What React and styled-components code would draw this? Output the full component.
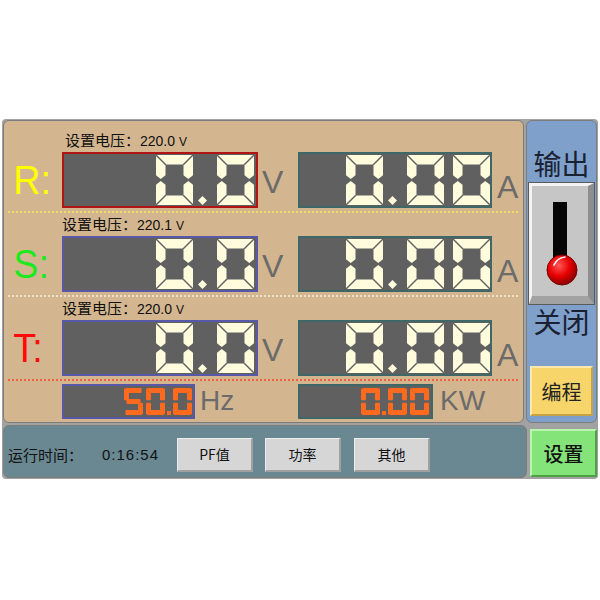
import React from 'react';
import styled, { createGlobalStyle } from 'styled-components';

const GlobalStyle = createGlobalStyle`
  html, body { margin: 0; padding: 0; background: #ffffff; }
  body { font-family: "Liberation Sans", "Noto Sans CJK SC", sans-serif; }
  * { box-sizing: border-box; }
`;

const CJK = `"Noto Sans CJK SC", "Liberation Sans", sans-serif`;

const SEGS = {
  '0': 'abcdef', '1': 'bc', '2': 'abged', '3': 'abgcd', '4': 'fgbc',
  '5': 'afgcd', '6': 'afgedc', '7': 'abc', '8': 'abcdefg', '9': 'abcdfg',
};

function segPolys(x0, w, h, t, g) {
  const m = h / 2;
  const ht = t / 2;
  const n = t * 0.4;
  return {
    a: [[x0 + g, 0], [x0 + w - g, 0], [x0 + w - t - g, t], [x0 + t + g, t]],
    d: [[x0 + g, h], [x0 + w - g, h], [x0 + w - t - g, h - t], [x0 + t + g, h - t]],
    f: [[x0, g], [x0 + t, t + g], [x0 + t, m - n - g], [x0 + ht, m - g], [x0, m - n - g]],
    e: [[x0, h - g], [x0 + t, h - t - g], [x0 + t, m + n + g], [x0 + ht, m + g], [x0, m + n + g]],
    b: [[x0 + w, g], [x0 + w - t, t + g], [x0 + w - t, m - n - g], [x0 + w - ht, m - g], [x0 + w, m - n - g]],
    c: [[x0 + w, h - g], [x0 + w - t, h - t - g], [x0 + w - t, m + n + g], [x0 + w - ht, m + g], [x0 + w, m + n + g]],
    g: [[x0 + ht + g, m], [x0 + t + g, m - ht], [x0 + w - t - g, m - ht], [x0 + w - ht - g, m], [x0 + w - t - g, m + ht], [x0 + t + g, m + ht]],
  };
}

function flatRects(x0, w, h, t, g) {
  const m = h / 2;
  const gm = 1.3;
  return {
    a: [x0 + g, 0, w - 2 * g, t],
    d: [x0 + g, h - t, w - 2 * g, t],
    g: [x0 + g + 1, m - t / 2, w - 2 * g - 2, t],
    f: [x0, 0.6, t, m - gm - 0.6],
    e: [x0, m + gm, t, h - 0.6 - m - gm],
    b: [x0 + w - t, 0.6, t, m - gm - 0.6],
    c: [x0 + w - t, m + gm, t, h - 0.6 - m - gm],
  };
}

function SevenSeg({ value, w, h, t, g, gap, dotPre, dotSize, dotPost, color, diamond, flat }) {
  let x = 0;
  const shapes = [];
  const chars = value.split('');
  chars.forEach((c, i) => {
    if (c === '.') {
      x -= gap;
      const dx = x + dotPre;
      const s = dotSize;
      const pts = diamond
        ? [[dx, h - s / 2], [dx + s / 2, h - s], [dx + s, h - s / 2], [dx + s / 2, h]]
        : [[dx, h - s], [dx + s, h - s], [dx + s, h], [dx, h]];
      shapes.push(<polygon key={i} points={pts.map(p => p.join(',')).join(' ')} fill={color} />);
      x = dx + s + dotPost;
    } else {
      const segs = (SEGS[c] || '').split('');
      if (flat) {
        const rects = flatRects(x, w, h, t, g);
        segs.forEach(s => {
          const [rx, ry, rw, rh] = rects[s];
          shapes.push(<rect key={`${i}${s}`} x={rx} y={ry} width={rw} height={rh} rx="1" fill={color} />);
        });
      } else {
        const polys = segPolys(x, w, h, t, g);
        segs.forEach(s => {
          shapes.push(
            <polygon key={`${i}${s}`} points={polys[s].map(p => p.join(',')).join(' ')} fill={color} />
          );
        });
      }
      x += w + gap;
    }
  });
  const width = chars[chars.length - 1] === '.' ? x : x - gap;
  return (
    <svg width={width} height={h} viewBox={`0 0 ${width} ${h}`} style={{ display: 'block' }}>
      {shapes}
    </svg>
  );
}

const BigDigits = ({ value }) => (
  <SevenSeg value={value} w={37} h={50} t={9.5} g={1} gap={9} dotPre={5} dotSize={9} dotPost={10} color="#FFFBDD" diamond />
);

const SmallDigits = ({ value }) => (
  <SevenSeg value={value} w={19} h={27} t={5} g={1.5} gap={3} dotPre={2} dotSize={4} dotPost={2} color="#FF6A1F" flat />
);

const Page = styled.div`
  width: 600px;
  height: 600px;
  padding-top: 119px;
  background: #ffffff;
`;

const Frame = styled.div`
  margin: 0 2px;
  padding: 1px;
  background: #a2a2a2;
  border-radius: 4px;
  display: flex;
  flex-direction: column;
  gap: 2px;
`;

const TopRow = styled.div`
  display: flex;
  gap: 2px;
  height: 303px;
`;

const TanPanel = styled.div`
  width: 521px;
  background: #d3b68f;
  border: 1px solid #7c7c7c;
  border-radius: 6px;
  padding: 11px 0 0 1px;
  display: flex;
  flex-direction: column;
`;

const PhaseRow = styled.div`
  display: grid;
  grid-template-columns: 57px 196px 40px 194px 1fr;
  grid-template-rows: 16px 56px;
  row-gap: 4px;
`;

const SetLabel = styled.div`
  grid-column: 2 / 5;
  grid-row: 1;
  padding-left: ${p => p.$pl}px;
  font-family: ${CJK};
  font-size: 15px;
  line-height: 16px;
  color: #111;
  white-space: nowrap;
`;

const SetValue = styled.span`
  font-family: "Liberation Sans", sans-serif;
  font-size: 14px;
`;

const SetUnit = styled.span`
  font-family: "Liberation Sans", sans-serif;
  font-size: 12px;
  margin-left: 4px;
`;

const PhaseLetter = styled.div`
  grid-column: 1;
  grid-row: 2;
  display: flex;
  align-items: center;
  padding-left: 9px;
  color: ${p => p.$color};
  font-family: "Liberation Sans", sans-serif;
  font-size: 41px;
  line-height: 1;
  transform: scaleX(0.92);
  transform-origin: left center;
  white-space: nowrap;
`;

const Display = styled.div`
  grid-row: ${p => p.$row || 'auto'};
  height: ${p => p.$h}px;
  background: #606060;
  border: 2px solid ${p => p.$border};
  display: flex;
  align-items: center;
  justify-content: flex-end;
  padding-right: ${p => p.$pr}px;
`;

const Unit = styled.div`
  grid-row: ${p => p.$row || 'auto'};
  display: flex;
  align-items: flex-end;
  padding-left: ${p => p.$pl}px;
  padding-bottom: ${p => p.$pb}px;
  font-family: "Liberation Sans", sans-serif;
  font-size: ${p => p.$size}px;
  line-height: 1;
  color: #6b6b6b;
`;

const Separator = styled.div`
  margin: 3px 5px 3px 3px;
  border-top: 2px dotted ${p => p.$color};
`;

const FreqRow = styled.div`
  display: grid;
  grid-template-columns: 57px 133px 103px 135px 1fr;
  height: 35px;
`;

const BluePanel = styled.div`
  flex: 1;
  background: #7fa0cb;
  border: 1px solid #7c7c7c;
  border-radius: 6px;
  display: flex;
  flex-direction: column;
  align-items: center;
  padding-top: 25px;
`;

const PanelTitle = styled.div`
  font-family: ${CJK};
  font-size: 28px;
  line-height: 34px;
  color: #1a2232;
`;

const SwitchBox = styled.div`
  width: 65px;
  height: 121px;
  margin-top: 3px;
  background: #c6c6c6;
  border-style: solid;
  border-width: 3px 6px 8px 3px;
  border-color: #f3f3f3 #8e8e8e #a2a2a2 #f3f3f3;
  box-shadow: 0 0 0 1px #5a5a5a;
`;

const ProgButton = styled.div`
  margin-top: 28px;
  width: 63px;
  height: 50px;
  background: #f8d56a;
  border: 2px solid;
  border-color: #fbe8ad #c8a343 #c8a343 #fbe8ad;
  display: flex;
  align-items: center;
  justify-content: center;
  font-family: ${CJK};
  font-size: 20px;
  color: #222;
`;

const BottomRow = styled.div`
  display: flex;
  gap: 3px;
  height: 53px;
`;

const SlateBar = styled.div`
  width: 524px;
  background: #6a8891;
  border: 1px solid #7c7c7c;
  border-radius: 6px;
  display: flex;
  align-items: center;
  padding: 8px 0 2px 4px;
`;

const RunLabel = styled.div`
  font-family: ${CJK};
  font-size: 15px;
  color: #111;
  width: 94px;
`;

const RunTime = styled.div`
  width: 75px;
  font-family: "Liberation Sans", sans-serif;
  font-size: 15px;
  letter-spacing: 1px;
  color: #111;
`;

const ToolButton = styled.div`
  width: 76px;
  height: 34px;
  margin-left: ${p => p.$ml}px;
  background: #d6d6d6;
  border-style: solid;
  border-width: 1px 2px 2px 1px;
  border-color: #ececec #a0a0a0 #a0a0a0 #ececec;
  display: flex;
  align-items: center;
  justify-content: center;
  font-family: ${CJK};
  font-size: 14px;
  color: #111;
`;

const GreenButton = styled.div`
  flex: 1;
  margin: 4px 0 1px 0;
  background: #84e47a;
  border: 2px solid;
  border-color: #baf5b0 #4f9f46 #4f9f46 #baf5b0;
  display: flex;
  align-items: center;
  justify-content: center;
  font-family: ${CJK};
  font-size: 20px;
  font-weight: 500;
  color: #111;
`;

const phases = [
  { letter: 'R:', color: '#ffff00', set: '220.0', vBorder: '#b01414', labelPl: 3, sep: '#eedc5a' },
  { letter: 'S:', color: '#1ee81e', set: '220.1', vBorder: '#5858a8', labelPl: 0, sep: '#ece0cc' },
  { letter: 'T:', color: '#ff0a0a', set: '220.0', vBorder: '#5858a8', labelPl: 0, sep: '#f06040' },
];

function Lever() {
  return (
    <svg width="56" height="110" viewBox="0 0 56 110" style={{ display: 'block' }}>
      <defs>
        <radialGradient id="ball" cx="40%" cy="35%" r="65%">
          <stop offset="0%" stopColor="#ff5a5a" />
          <stop offset="55%" stopColor="#e80000" />
          <stop offset="100%" stopColor="#8a0000" />
        </radialGradient>
      </defs>
      <rect x="21" y="16" width="14" height="64" fill="#050505" />
      <circle cx="30" cy="84" r="15" fill="url(#ball)" stroke="#7a0000" strokeWidth="1" />
      <path d="M22 79 Q25 72 33 71" stroke="#ffffff" strokeWidth="1.6" fill="none" strokeLinecap="round" />
    </svg>
  );
}

export default function App() {
  return (
    <Page>
      <GlobalStyle />
      <Frame>
        <TopRow>
          <TanPanel>
            {phases.map(p => (
              <React.Fragment key={p.letter}>
                <PhaseRow>
                  <SetLabel $pl={p.labelPl}>
                    设置电压：<SetValue>{p.set}</SetValue><SetUnit>V</SetUnit>
                  </SetLabel>
                  <PhaseLetter $color={p.color}>{p.letter}</PhaseLetter>
                  <Display $row={2} $h={56} $border={p.vBorder} $pr={2}>
                    <BigDigits value="0.0" />
                  </Display>
                  <Unit $row={2} $pl={4} $pb={10} $size={32}>V</Unit>
                  <Display $row={2} $h={56} $border="#3e6868" $pr={0}>
                    <BigDigits value="0.00" />
                  </Display>
                  <Unit $row={2} $pl={5} $pb={5} $size={32}>A</Unit>
                </PhaseRow>
                <Separator $color={p.sep} />
              </React.Fragment>
            ))}
            <FreqRow>
              <span />
              <Display $h={35} $border="#5858a8" $pr={1}>
                <SmallDigits value="50.0" />
              </Display>
              <Unit $pl={5} $pb={4} $size={28}>Hz</Unit>
              <Display $h={35} $border="#3e6868" $pr={2}>
                <SmallDigits value="0.00" />
              </Display>
              <Unit $pl={7} $pb={4} $size={28}>KW</Unit>
            </FreqRow>
          </TanPanel>
          <BluePanel>
            <PanelTitle>输出</PanelTitle>
            <SwitchBox>
              <Lever />
            </SwitchBox>
            <PanelTitle>关闭</PanelTitle>
            <ProgButton>编程</ProgButton>
          </BluePanel>
        </TopRow>
        <BottomRow>
          <SlateBar>
            <RunLabel>运行时间：</RunLabel>
            <RunTime>0:16:54</RunTime>
            <ToolButton $ml={0}>PF值</ToolButton>
            <ToolButton $ml={12}>功率</ToolButton>
            <ToolButton $ml={13}>其他</ToolButton>
          </SlateBar>
          <GreenButton>设置</GreenButton>
        </BottomRow>
      </Frame>
    </Page>
  );
}
